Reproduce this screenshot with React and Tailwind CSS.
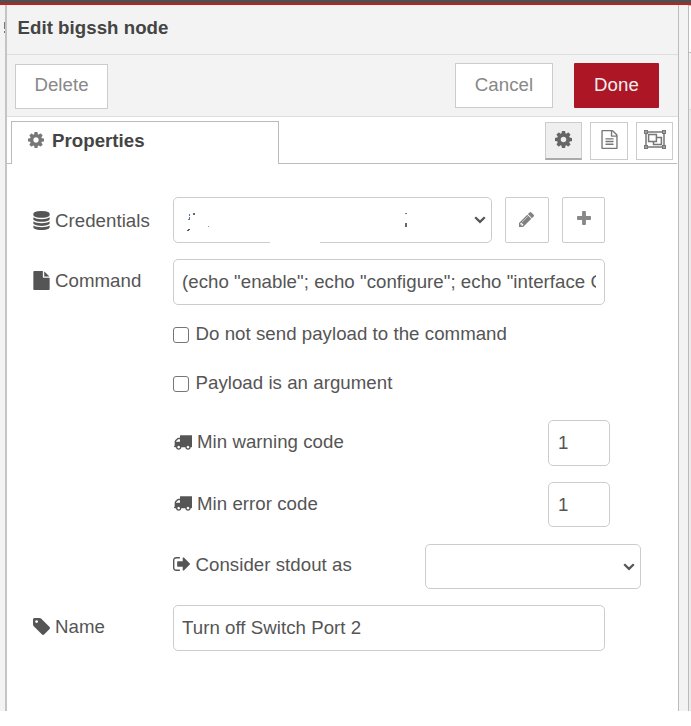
import React from "react";

const ICONS = {
  cog: {
    box: "128 128 1536 1536",
    d: "M1152 896q0-106-75-181t-181-75-181 75-75 181 75 181 181 75 181-75 75-181zm512-109v222q0 12-8 23t-20 13l-185 28q-19 54-39 91 35 50 107 138 10 12 10 25t-9 23q-27 37-99 108t-94 71q-12 0-26-9l-138-108q-44 23-91 38-16 136-29 186-7 28-36 28h-222q-14 0-24.5-8.5t-11.5-21.5l-28-184q-49-16-90-37l-141 107q-10 9-25 9-14 0-25-11-126-114-165-168-7-10-7-23 0-12 8-23 15-21 51-66.5t54-70.5q-27-50-41-99l-183-27q-13-2-21-12.5t-8-23.5v-222q0-12 8-23t19-13l186-28q14-46 39-92-40-57-107-138-10-12-10-24 0-10 9-23 26-36 98.5-107.5t94.5-71.5q13 0 26 10l138 107q44-23 91-38 16-136 29-186 7-28 36-28h222q14 0 24.5 8.5t11.5 21.5l28 184q49 16 90 37l142-107q9-9 24-9 13 0 25 10 129 119 165 170 7 8 7 22 0 12-8 23-15 21-51 66.5t-54 70.5q26 50 41 98l183 28q13 2 21 12.5t8 23.5z",
  },
  fileText: {
    box: "128 0 1536 1792",
    d: "M1596 380q28 28 48 76t20 88v1152q0 40-28 68t-68 28h-1344q-40 0-68-28t-28-68v-1600q0-40 28-68t68-28h896q40 0 88 20t76 48zm-444-244v376h376q-10-29-22-41l-313-313q-12-12-41-22zm384 1528v-1024h-416q-40 0-68-28t-28-68v-416h-768v1536h1280zm-1024-864q0-14 9-23t23-9h704q14 0 23 9t9 23v64q0 14-9 23t-23 9h-704q-14 0-23-9t-9-23v-64zm736 224q14 0 23 9t9 23v64q0 14-9 23t-23 9h-704q-14 0-23-9t-9-23v-64q0-14 9-23t23-9h704zm0 256q14 0 23 9t9 23v64q0 14-9 23t-23 9h-704q-14 0-23-9t-9-23v-64q0-14 9-23t23-9h704z",
  },
  plus: {
    box: "192 128 1408 1408",
    d: "M1600 736v192q0 40-28 68t-68 28h-416v416q0 40-28 68t-68 28h-192q-40 0-68-28t-28-68v-416h-416q-40 0-68-28t-28-68v-192q0-40 28-68t68-28h416v-416q0-40 28-68t68-28h192q40 0 68 28t28 68v416h416q40 0 68 28t28 68z",
  },
  pencil: {
    box: "128 149 1515 1515",
    d: "M491 1536l91-91-235-235-91 91v107h128v128h107zm523-928q0-22-22-22-10 0-17 7l-542 542q-7 7-7 17 0 22 22 22 10 0 17-7l542-542q7-7 7-17zm-54-192l416 416-832 832h-416v-416zm683 96q0 53-37 90l-166 166-416-416 166-165q36-38 90-38 53 0 91 38l235 234q37 39 37 91z",
  },
  database: {
    box: "128 0 1536 1792",
    d: "M896 768q237 0 443-43t325-127v170q0 69-103 128t-280 93.5-385 34.5-385-34.5-280-93.5-103-128v-170q119 84 325 127t443 43zm0 768q237 0 443-43t325-127v170q0 69-103 128t-280 93.5-385 34.5-385-34.5-280-93.5-103-128v-170q119 84 325 127t443 43zm0-384q237 0 443-43t325-127v170q0 69-103 128t-280 93.5-385 34.5-385-34.5-280-93.5-103-128v-170q119 84 325 127t443 43zm0-1152q208 0 385 34.5t280 93.5 103 128v128q0 69-103 128t-280 93.5-385 34.5-385-34.5-280-93.5-103-128v-128q0-69 103-128t280-93.5 385-34.5z",
  },
  file: {
    box: "128 0 1536 1792",
    d: "M1152 512v-472q22 14 36 28l408 408q14 14 28 36h-472zm-128 32q0 40 28 68t68 28h544v1056q0 40-28 68t-68 28h-1344q-40 0-68-28t-28-68v-1600q0-40 28-68t68-28h800v544z",
  },
  truck: {
    box: "64 256 1728 1408",
    d: "M640 1408q0-52-38-90t-90-38-90 38-38 90 38 90 90 38 90-38 38-90zm-384-512h384v-256h-158q-13 0-22 9l-195 195q-9 9-9 22v30zm1280 512q0-52-38-90t-90-38-90 38-38 90 38 90 90 38 90-38 38-90zm256-1088v1024q0 15-4 26.5t-13.5 18.5-16.5 11.5-23.5 6-22.5 2-25.5 0-22.5-.5q0 106-75 181t-181 75-181-75-75-181h-384q0 106-75 181t-181 75-181-75-75-181h-64q-3 0-22.5.5t-25.5 0-22.5-2-23.5-6-16.5-11.5-13.5-18.5-4-26.5q0-26 19-45t45-19v-320q0-8-.5-35t0-38 2.5-34.5 6.5-37 14-30.5 22.5-30l198-198q19-19 50.5-32t58.5-13h160v-192q0-26 19-45t45-19h1024q26 0 45 19t19 45z",
  },
  signOut: {
    box: "64 256 1568 1280",
    d: "M704 1440q0 4 1 20t.5 26.5-3 23.5-10 19.5-20.5 6.500h-320q-119 0-203.5-84.500t-84.500-203.500v-704q0-119 84.500-203.500t203.500-84.500h320q13 0 22.500 9.500t9.500 22.500q0 4 1 20t.5 26.500-3 23.500-10 19.500-20.500 6.500h-320q-66 0-113 47t-47 113v704q0 66 47 113t113 47h312l11.500 1 11.500 3 8 5.500 7 9 2 13.500zm928-544q0 26-19 45l-544 544q-19 19-45 19t-45-19-19-45v-288h-448q-26 0-45-19t-19-45v-384q0-26 19-45t45-19h448v-288q0-26 19-45t45-19 45 19l544 544q19 19 19 45z",
  },
  tag: {
    box: "128 128 1515 1515",
    d: "M576 448q0-53-37.500-90.500t-90.500-37.500-90.500 37.500-37.500 90.500 37.500 90.500 90.500 37.500 90.500-37.500 37.500-90.500zm1067 576q0 53-37 90l-491 492q-39 37-91 37-53 0-90-37l-715-716q-38-37-64.500-101t-26.500-117v-416q0-52 38-90t90-38h416q53 0 117 26.500t102 64.500l715 714q37 39 37 91z",
  },
};

function Icon({ name, className }) {
  const icon = ICONS[name];
  return (
    <svg viewBox={icon.box} className={`shrink-0 fill-current ${className}`} aria-hidden="true">
      <path d={icon.d} />
    </svg>
  );
}

function ObjectGroup() {
  return (
    <svg viewBox="0 0 22 19" className="h-[19px] w-[22px] fill-none stroke-current" aria-hidden="true">
      <path d="M4 2H18M4 17H18M2 4V15M20 4V15" strokeWidth="1.5" />
      <path d="M.7.7H3.300V3.300H.7ZM18.700.7H21.300V3.300H18.700ZM.7 15.700H3.300V18.300H.7ZM18.700 15.700H21.300V18.300H18.700Z" strokeWidth="1.4" />
      <path d="M4.600 4.600H12.400V11.400H4.600Z M12.500 7.500H17.400V14.400H9.500V11.500" strokeWidth="1.500" />
    </svg>
  );
}

function Chevron() {
  return (
    <svg viewBox="0 0 12 8" className="h-2 w-3 shrink-0 fill-none stroke-[#555]" aria-hidden="true">
      <path d="M1.200 1.200 6 5.900 10.800 1.200" strokeWidth="2.200" />
    </svg>
  );
}

function Label({ icon, iconClass, className, children }) {
  return (
    <div className={`flex items-center ${className}`}>
      <Icon name={icon} className={iconClass} />
      <span className="whitespace-pre">{children}</span>
    </div>
  );
}

const field = "flex items-center rounded-[5px] border border-[#ccc] bg-white";

export default function App() {
  return (
    <div className="h-[726px] w-[691px] overflow-hidden bg-white font-['Liberation_Sans',Arial,sans-serif] text-[18.67px] leading-6 tracking-[0.04px] text-[#555]">
      <div className="h-[5px] border-b-2 border-[#c02020] bg-[#4f4f4f]" />
      <div className="flex h-[706px]">
        <div className="w-[7px] shrink-0 border-r-2 border-[#c4c4c4] bg-[#f3f3f3] pt-[17px]">
          <div className="ml-auto h-[7px] w-px bg-[#777]" />
          <div className="ml-auto mt-0.5 h-0.5 w-px bg-[#777]" />
        </div>

        <div className="flex w-[671px] shrink-0 flex-col">
          <div className="h-[50px] border-b border-[#ddd] bg-[#f3f3f3] pl-[10.5px] pt-[11px] font-bold text-[#444]">
            Edit bigssh node
          </div>

          <div className="flex h-[62px] items-start border-b border-[#ddd] bg-[#f3f3f3] pl-2 pt-2 text-[#888]">
            <button className="mt-px h-[45px] w-[93px] border border-[#ccc] bg-white pb-[3px]">Delete</button>
            <button className="ml-[347px] h-[45px] w-[98px] border border-[#ccc] bg-white pb-0.5">Cancel</button>
            <button className="ml-[21px] h-[45px] w-[85px] rounded-[1px] bg-[#ad1625] pb-0.5 text-[#eee]">Done</button>
          </div>

          <div className="flex h-[47px] pt-1">
            <div className="w-1 border-b border-[#bbb]" />
            <div className="flex w-[268px] border-l border-r border-t border-[#bbb] pl-4 pt-[7px] font-bold text-[#444]">
              <Icon name="cog" className="mt-[3px] h-4 w-4 text-[#777]" />
              <span className="ml-2">Properties</span>
            </div>
            <div className="mr-px flex flex-1 items-start justify-end border-b border-[#bbb] pr-1 pt-px text-[#777]">
              <div className="flex h-[38px] w-[37px] justify-center border border-b-2 border-[#ccc] border-b-[#aaa] bg-[#efefef] pt-2 text-[#666]">
                <Icon name="cog" className="h-[17px] w-[17px]" />
              </div>
              <div className="ml-2 flex h-[38px] w-[38px] justify-center border border-[#ccc] pt-[7px]">
                <Icon name="fileText" className="h-[19px] w-[17px]" />
              </div>
              <div className="ml-2 flex h-[38px] w-[37px] justify-center border border-[#ccc] pt-[7px]">
                <ObjectGroup />
              </div>
            </div>
          </div>

          <div className="flex flex-col pl-[26px] pt-[33px]">
            <div className="flex h-[46px]">
              <Label icon="database" iconClass="mr-[5px] -mt-px h-[19px] w-[17px]" className="w-[140px] pt-0.5">Credentials</Label>
              <div className={`${field} relative w-[319px] justify-end pr-[5px]`}>
                <span className="absolute left-[15px] top-[16px] h-[2px] w-px bg-[#579]" />
                <span className="absolute left-[19px] top-[15px] h-[2px] w-[2px] bg-[#666]" />
                <span className="absolute left-[15px] top-[19px] h-[2px] w-px bg-[#579]" />
                <span className="absolute left-[14px] top-[21px] h-px w-[2px] bg-[#678]" />
                <span className="absolute left-[14px] top-[31px] h-px w-[2px] bg-[#555]" />
                <span className="absolute left-[13px] top-[32px] h-px w-[2px] bg-[#555]" />
                <span className="absolute left-[34px] top-[28px] h-px w-px bg-[#c84]" />
                <span className="absolute left-[231px] top-[15px] h-px w-[2px] bg-[#777]" />
                <span className="absolute left-[231px] top-[25px] h-1 w-[2px] bg-[#667]" />
                <span className="absolute -bottom-px left-[96px] h-px w-[50px] bg-white" />
                <Chevron />
              </div>
              <button className="ml-[13px] flex w-[44px] justify-center rounded-[2px] border border-[#ccc] pt-[14px] text-[#808080]">
                <Icon name="pencil" className="-ml-px h-[15px] w-[15px]" />
              </button>
              <button className="ml-[13px] flex w-[43px] justify-center rounded-[2px] border border-[#ccc] pt-[13px] text-[#888]">
                <Icon name="plus" className="h-[14px] w-[14px]" />
              </button>
            </div>

            <div className="mt-4 flex h-[46px]">
              <Label icon="file" iconClass="mr-[5px] h-[19px] w-[17px]" className="w-[140px] pb-[3px]">Command</Label>
              <div className={`${field} w-[432px] px-2`}>
                <span className="w-full overflow-hidden whitespace-nowrap">(echo "enable"; echo "configure"; echo "interface G</span>
              </div>
            </div>

            <div className="ml-[140px] mt-[17px] flex h-6 items-center">
              <span className="mt-0.5 h-4 w-4 rounded-[3px] border border-[#767676]" />
              <span className="ml-[6.500px]">Do not send payload to the command</span>
            </div>
            <div className="ml-[140px] mt-[25px] flex h-6 items-center">
              <span className="mt-0.5 h-4 w-4 rounded-[3px] border border-[#767676]" />
              <span className="ml-[6.500px]">Payload is an argument</span>
            </div>

            <div className="ml-[140px] mt-[25px] flex h-[46px]">
              <Label icon="truck" iconClass="ml-px mr-[5px] h-[15px] w-[18px]" className="w-[375px] pb-0.5">Min warning code</Label>
              <div className={`${field} w-[62px] pl-[9px]`}>1</div>
            </div>
            <div className="ml-[140px] mt-4 flex h-[45px]">
              <Label icon="truck" iconClass="ml-px mr-[5px] h-[15px] w-[18px]" className="w-[375px] pb-0.5">Min error code</Label>
              <div className={`${field} w-[62px] pl-[9px]`}>1</div>
            </div>
            <div className="ml-[140px] mt-[17px] flex h-[45px]">
              <Label icon="signOut" iconClass="mr-[5.500px] -mt-0.5 h-[14px] w-[17px]" className="w-[252px] pb-1">Consider stdout as</Label>
              <div className={`${field} w-[216px] justify-end pr-[5px]`}>
                <Chevron />
              </div>
            </div>

            <div className="mt-4 flex h-[46px]">
              <Label icon="tag" iconClass="mr-[5px] -mt-px h-[17px] w-[17px]" className="w-[140px] pb-[3px]">Name</Label>
              <div className={`${field} w-[432px] px-2`}>Turn off Switch Port 2</div>
            </div>
          </div>
        </div>

        <div className="w-[11px] shrink-0 border-l border-r border-[#bbb] bg-[#f3f3f3]" />
        <div className="flex w-0.5 shrink-0 flex-col bg-[#ececec]">
          <div className="h-[48px] border-b border-t border-[#bbb] bg-white" />
          <div className="h-[57px] border-b border-[#ddd] bg-[#f3f3f3]" />
        </div>
      </div>
    </div>
  );
}
